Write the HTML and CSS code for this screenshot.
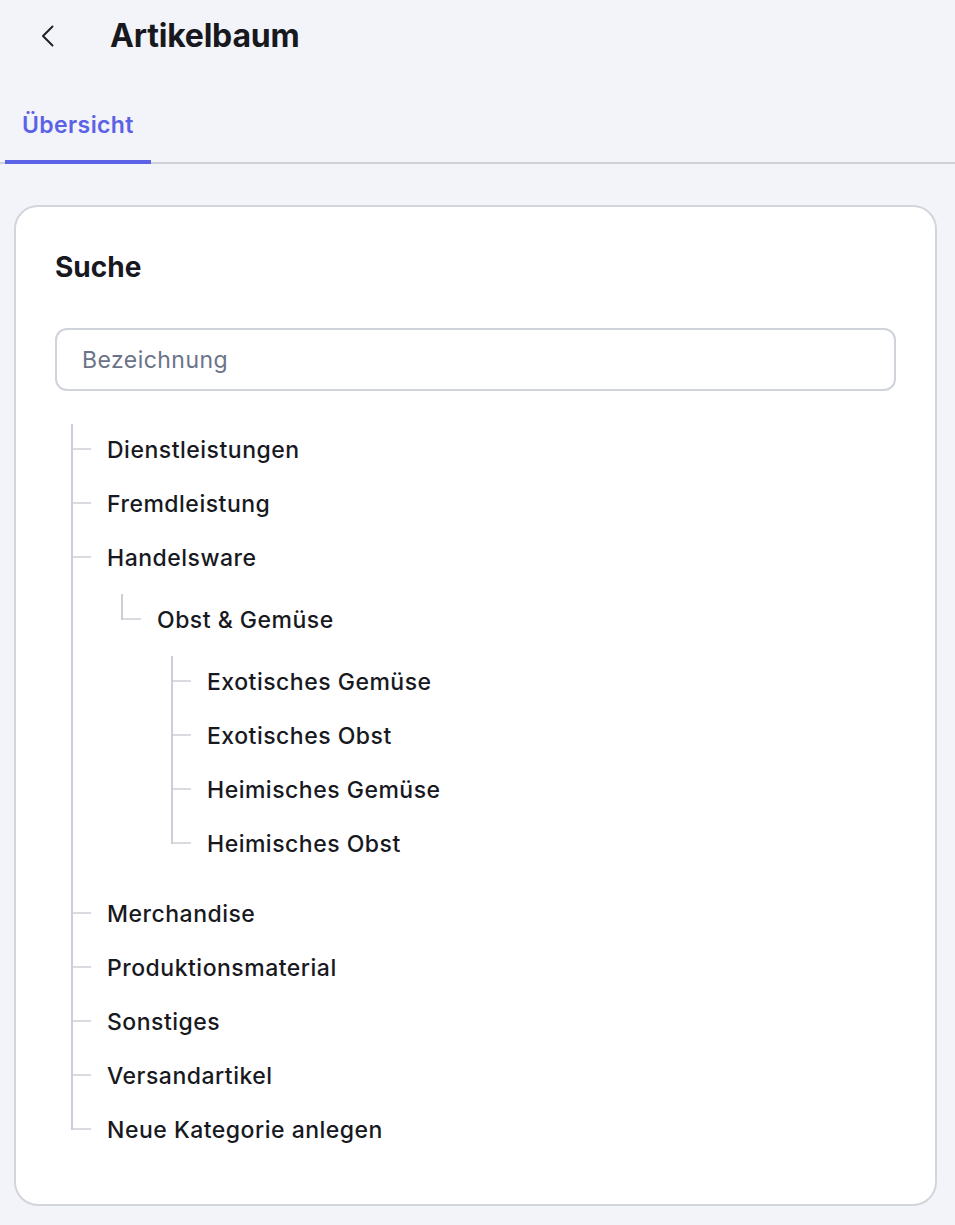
FILE: index.html
```html
<!DOCTYPE html>
<html lang="de">
<head>
    <meta charset="UTF-8">
    <meta name="viewport" content="width=device-width, initial-scale=1.0"/>
    <title>Artikelbaum</title>
    <link rel="stylesheet" href="styles.css">
</head>
<body>
<div class="g-hd">
    <a class="back-btn" href="#">
        <svg width="14" height="22" viewBox="0 0 14 22">
            <polyline points="11.5,1.5 2,11 11.5,20.5" fill="none" stroke="#1f2128" stroke-width="2" stroke-linecap="round" stroke-linejoin="round"/>
        </svg>
    </a>
    <h1 class="page-title">Artikelbaum</h1>
</div>
<div class="g-tabs">
    <a class="tab active" href="#">Übersicht</a>
</div>
<div class="g-card">
    <h2 class="card-title">Suche</h2>
    <input class="search-input" type="text" placeholder="Bezeichnung">
    <ul class="m-tree">
        <li><span class="label">Dienstleistungen</span></li>
        <li><span class="label">Fremdleistung</span></li>
        <li>
            <span class="label">Handelsware</span>
            <ul>
                <li>
                    <span class="label">Obst &amp; Gemüse</span>
                    <ul>
                        <li><span class="label">Exotisches Gemüse</span></li>
                        <li><span class="label">Exotisches Obst</span></li>
                        <li><span class="label">Heimisches Gemüse</span></li>
                        <li><span class="label">Heimisches Obst</span></li>
                    </ul>
                </li>
            </ul>
        </li>
        <li><span class="label">Merchandise</span></li>
        <li><span class="label">Produktionsmaterial</span></li>
        <li><span class="label">Sonstiges</span></li>
        <li><span class="label">Versandartikel</span></li>
        <li><span class="label">Neue Kategorie anlegen</span></li>
    </ul>
</div>
</body>
</html>
```

FILE: styles.css
```css
* {
    margin: 0;
    padding: 0;
    box-sizing: border-box;
}
ul {
    list-style: none;
}
a {
    text-decoration: none;
}
body {
    background-color: #f3f4f9;
    font-family: Inter, "Noto Sans", sans-serif;
    color: #18191f;
}

/* header */
.g-hd {
    display: flex;
    align-items: center;
    height: 72px;
    padding-left: 41px;
}
.back-btn {
    display: flex;
    width: 14px;
    height: 22px;
}
.page-title {
    margin-left: 55px;
    font-size: 32px;
    font-weight: 700;
    line-height: 40px;
    letter-spacing: -0.2px;
}

/* tabs */
.g-tabs {
    display: flex;
    margin-top: 8px;
    box-shadow: inset 0 -2px 0 #cfd1d9;
}
.tab {
    margin-left: 5px;
    padding: 30px 17px 20px;
    border-bottom: 4px solid #5b62e5;
    color: #5b62e5;
    font-size: 23px;
    font-weight: 600;
    line-height: 30px;
    letter-spacing: 0.4px;
}

/* card */
.g-card {
    margin: 41px 18px 0 14px;
    padding: 43px 39px 48px;
    border: 2px solid #d3d5dc;
    border-radius: 24px;
    background-color: #fff;
}
.card-title {
    font-size: 28px;
    font-weight: 700;
    line-height: 34px;
}
.search-input {
    display: block;
    width: 100%;
    height: 63px;
    margin-top: 44px;
    padding: 0 25px;
    border: 2px solid #d0d3da;
    border-radius: 12px;
    font-family: inherit;
    font-size: 23px;
    letter-spacing: 0.45px;
    color: #18191f;
    outline: none;
}
.search-input::placeholder {
    color: #6b7388;
}

/* tree */
.m-tree {
    margin-top: 31px;
    padding-left: 16px;
}
.m-tree ul {
    padding: 8px 0 8px 14px;
}
.m-tree li {
    position: relative;
    padding-left: 36px;
}
.m-tree li::before {
    content: "";
    position: absolute;
    left: 0;
    top: 0;
    bottom: 0;
    width: 2px;
    background-color: #cbced6;
}
.m-tree li:first-child::before {
    top: 2px;
}
.m-tree li:last-child::before {
    bottom: auto;
    height: 28px;
}
.m-tree li:first-child:last-child::before {
    height: 26px;
}
.label {
    position: relative;
    display: block;
    height: 54px;
    padding-top: 2px;
    font-size: 23px;
    font-weight: 500;
    line-height: 52px;
    letter-spacing: 0.5px;
}
.label::before {
    content: "";
    position: absolute;
    left: -34px;
    top: 26px;
    width: 18px;
    height: 2px;
    background-color: #d9dbe1;
}
```
